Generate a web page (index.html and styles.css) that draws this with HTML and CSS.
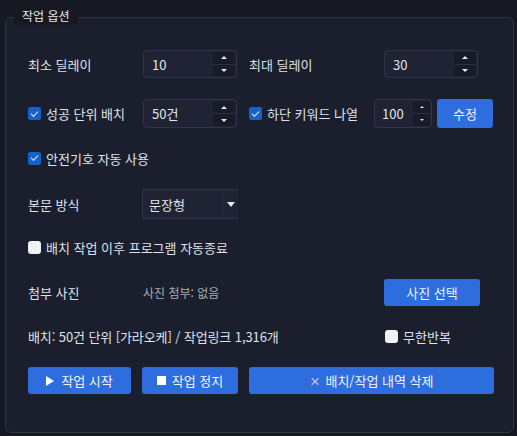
FILE: index.html
```html
<!DOCTYPE html>
<html lang="ko">
<head>
<meta charset="utf-8">
<title>작업 옵션</title>
<link rel="stylesheet" href="styles.css">
</head>
<body>
<div class="panel">
  <div class="title">작업 옵션</div>

  <div class="row r1">
    <span class="lbl w115">최소 딜레이</span>
    <div class="spin w94"><span class="val">10</span><div class="btns"><span class="btn"><i class="up"></i></span><span class="btn"><i class="dn"></i></span></div></div>
    <span class="lbl w135 ml11">최대 딜레이</span>
    <div class="spin w94"><span class="val">30</span><div class="btns"><span class="btn"><i class="up"></i></span><span class="btn"><i class="dn"></i></span></div></div>
  </div>

  <div class="row r2">
    <label class="chk w115"><span class="box on"></span>성공 단위 배치</label>
    <div class="spin w94"><span class="val">50건</span><div class="btns"><span class="btn"><i class="up"></i></span><span class="btn"><i class="dn"></i></span></div></div>
    <label class="chk w125 ml12"><span class="box on"></span>하단 키워드 나열</label>
    <div class="spin small w58"><span class="val">100</span><div class="btns"><span class="btn"><i class="up"></i></span><span class="btn"><i class="dn"></i></span></div></div>
    <span class="pbtn edit">수정</span>
  </div>

  <div class="row r3">
    <label class="chk"><span class="box on"></span>안전기호 자동 사용</label>
  </div>

  <div class="row r4">
    <span class="lbl w114">본문 방식</span>
    <div class="combo"><span class="val">문장형</span><span class="drop"><i class="dn big"></i></span></div>
  </div>

  <div class="row r5">
    <label class="chk"><span class="box"></span>배치 작업 이후 프로그램 자동종료</label>
  </div>

  <div class="row r6">
    <span class="lbl w115">첨부 사진</span>
    <span class="note">사진 첨부: 없음</span>
    <span class="pbtn photo">사진 선택</span>
  </div>

  <div class="row r7">
    <span class="lbl info">배치: 50건 단위 [가라오케] / 작업링크 1,316개</span>
    <label class="chk"><span class="box"></span>무한반복</label>
  </div>

  <div class="row r8">
    <span class="pbtn start"><i class="play"></i>작업 시작</span>
    <span class="pbtn stop"><i class="sq"></i>작업 정지</span>
    <span class="pbtn del"><span class="x">×</span>배치/작업 내역 삭제</span>
  </div>
</div>
</body>
</html>
```

FILE: styles.css
```css
* { box-sizing: border-box; }
html, body { margin: 0; padding: 0; }
body {
  background: #161922;
  font-family: "Noto Sans CJK KR", "Noto Sans", sans-serif;
  font-size: 13px;
  color: #dfe2ea;
  width: 517px;
  height: 436px;
  overflow: hidden;
}
.panel {
  position: relative;
  margin: 17px 0 0 5px;
  width: 509px;
  height: 416px;
  background: #1b1f2d;
  border: 1px solid #2f3546;
  border-radius: 6px;
  padding: 32px 0 0 22px;
  display: flex;
  flex-direction: column;
}
.title {
  position: absolute;
  left: 8px;
  top: -11px;
  padding: 0 8px;
  background: #161922;
  line-height: 18px;
  font-size: 12px;
  color: #e6e8ee;
}
.row { display: flex; align-items: center; }
.r1 { height: 28px; }
.r2 { height: 29px; margin-top: 21px; }
.r3 { height: 20px; margin-top: 20px; }
.r4 { height: 30px; margin-top: 21px; }
.r5 { height: 20px; margin-top: 18px; }
.r6 { height: 27px; margin-top: 22px; }
.r7 { height: 20px; margin-top: 20px; }
.r8 { height: 27px; margin-top: 21px; }

.w114 { width: 114px; flex: none; }
.w115 { width: 115px; flex: none; }
.w125 { width: 125px; flex: none; }
.w135 { width: 135px; flex: none; }
.w94 { width: 94px; flex: none; }
.w58 { width: 58px; flex: none; }
.ml11 { margin-left: 12px; }
.ml12 { margin-left: 12px; }

.lbl { white-space: nowrap; }

.spin {
  height: 28px;
  display: flex;
  background: #1f2334;
  border: 1px solid #30364a;
  border-radius: 4px;
  overflow: hidden;
}
.r2 .spin { height: 29px; }
.spin .val {
  flex: 1;
  display: flex;
  align-items: center;
  padding-left: 8px;
  color: #e4e6ec;
}
.spin.small .val { padding-left: 7px; }
.spin .btns {
  width: 22px;
  display: flex;
  flex-direction: column;
  background: #191c28;
  margin: 1px 1px 1px 0;
}
.spin.small .btns { width: 17px; }
.spin .btn {
  flex: 1;
  display: flex;
  align-items: center;
  justify-content: center;
}
.spin .btn + .btn { border-top: 1px solid #2b3142; }

.up, .dn { display: block; width: 0; height: 0; }
.up {
  border-left: 3.5px solid transparent;
  border-right: 3.5px solid transparent;
  border-bottom: 3.5px solid #e8eaf0;
}
.dn {
  border-left: 3.5px solid transparent;
  border-right: 3.5px solid transparent;
  border-top: 3.5px solid #e8eaf0;
}
.spin.small .up { border-left-width: 2px; border-right-width: 2px; border-bottom-width: 2px; }
.spin.small .dn { border-left-width: 2px; border-right-width: 2px; border-top-width: 2px; }
.dn.big { border-left-width: 4px; border-right-width: 4px; border-top-width: 5px; }

.chk {
  display: flex;
  align-items: center;
  white-space: nowrap;
}
.box {
  width: 13px;
  height: 13px;
  flex: none;
  margin-right: 5px;
  border-radius: 3px;
  background: #f1f2f4;
  position: relative;
}
.box.on { background: #1762c6; border-radius: 2px; }
.box.on::after {
  content: "";
  position: absolute;
  left: 3px;
  top: 3.5px;
  width: 6px;
  height: 3px;
  border-left: 1.5px solid #dfe8f7;
  border-bottom: 1.5px solid #dfe8f7;
  transform: rotate(-45deg);
}

.pbtn {
  display: flex;
  align-items: center;
  justify-content: center;
  background: #2e6ddd;
  color: #f2f5fb;
  border-radius: 3px;
  height: 27px;
  white-space: nowrap;
  flex: none;
  font-size: 13px;
}
.edit { width: 56px; height: 29px; margin-left: 5px; }
.photo { width: 96px; }
.start { width: 103px; }
.stop { width: 96px; margin-left: 11px; }
.del { width: 245px; margin-left: 11px; }
.x { font-size: 11px; margin-right: 5px; }

.play {
  display: block;
  width: 0; height: 0;
  border-top: 5px solid transparent;
  border-bottom: 5px solid transparent;
  border-left: 8px solid #ffffff;
  margin-right: 7px;
}
.sq {
  display: block;
  width: 9px; height: 9px;
  background: #ffffff;
  margin-right: 6px;
}

.combo {
  width: 96px;
  height: 30px;
  display: flex;
  background: #1f2334;
  border: 1px solid #30364a;
  border-right: none;
  border-radius: 4px 0 0 4px;
}
.combo .val {
  flex: 1;
  display: flex;
  align-items: center;
  padding-left: 6px;
  color: #e4e6ec;
}
.combo .drop {
  width: 16px;
  display: flex;
  align-items: center;
  justify-content: center;
  border-left: 1px solid #2a2f40;
  margin: 1px 0;
}

.note {
  width: 241px;
  flex: none;
  font-size: 12px;
  color: #a8adba;
}
.info { width: 357px; flex: none; letter-spacing: -0.1px; }
```
